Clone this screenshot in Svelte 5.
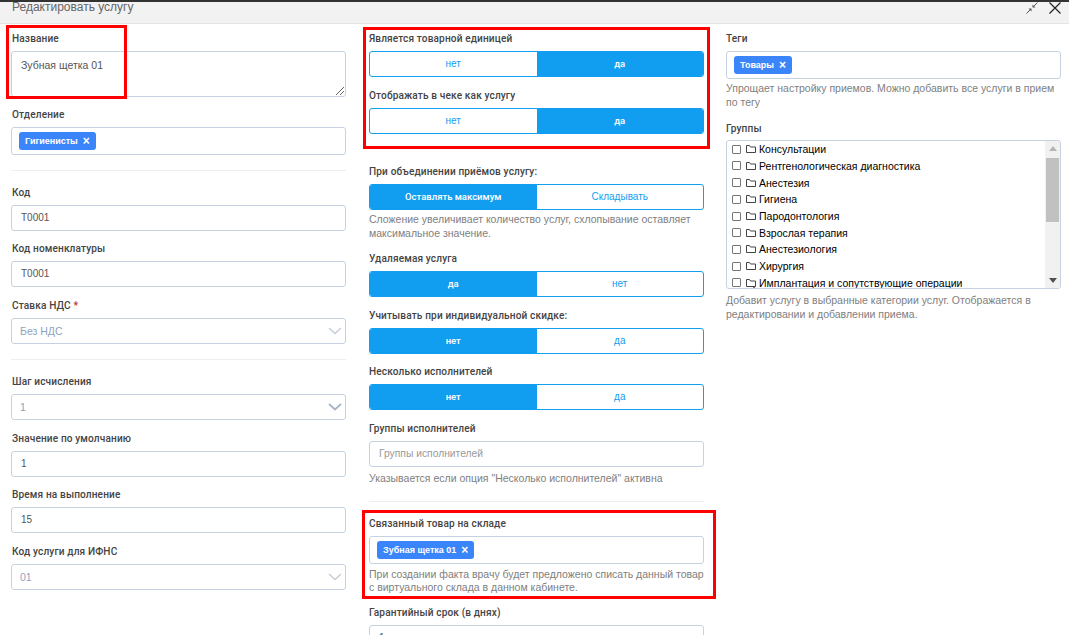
<script lang="ts">
  const groups = [
    "Консультации",
    "Рентгенологическая диагностика",
    "Анестезия",
    "Гигиена",
    "Пародонтология",
    "Взрослая терапия",
    "Анестезиология",
    "Хирургия",
    "Имплантация и сопутствующие операции",
  ];
</script>

{#snippet chip(text: string)}
  <div class="tagbox">
    <span class="chip">{text}<span class="chip-x">×</span></span>
  </div>
{/snippet}

{#snippet toggle(left: string, right: string, active: "left" | "right")}
  <div class="toggle">
    <span class="toggle-opt" class:on={active === "left"}>{left}</span>
    <span class="toggle-opt" class:on={active === "right"}>{right}</span>
  </div>
{/snippet}

{#snippet select(value: string, strong = false)}
  <div class="control select">
    <span>{value}</span>
    <svg width="14" height="8" viewBox="0 0 14 8"><path d="M1 1l6 5.5L13 1" fill="none" stroke={strong ? "#a9b5c4" : "#c3ccd8"} stroke-width={strong ? 1.8 : 1.3} /></svg>
  </div>
{/snippet}

<div class="page">
  <header class="head">
    <span class="title">Редактировать услугу</span>
    <div class="head-icons">
      <svg width="12" height="12" viewBox="0 0 12 12"><path d="M0.5 11.5L4.500 7.500M11.500 0.500L7.500 4.500" fill="none" stroke="#555" stroke-width="1" /><path d="M5.500 6.500H2.500L5.500 9.500zM6.500 5.500H9.500L6.500 2.500z" fill="#555" /></svg>
      <svg width="12" height="12" viewBox="0 0 12 12"><path d="M0.5 0.5l11 11M11.5 0.5l-11 11" fill="none" stroke="#222" stroke-width="1.2" /></svg>
    </div>
  </header>

  <div class="columns">
    <section class="col-first">
      <div class="field field-name">
        <span class="label">Название</span>
        <div class="control textarea">
          Зубная щетка 01
          <svg class="grip" width="9" height="9" viewBox="0 0 9 9"><path d="M1 9l8-8M5 9l4-4" stroke="#666" stroke-width="1" fill="none" /></svg>
        </div>
      </div>
      <div class="field">
        <span class="label">Отделение</span>
        {@render chip("Гигиенисты")}
      </div>
      <hr class="hr-first" />
      <div class="field">
        <span class="label">Код</span>
        <div class="control">T0001</div>
      </div>
      <div class="field">
        <span class="label">Код номенклатуры</span>
        <div class="control">T0001</div>
      </div>
      <div class="field">
        <span class="label">Ставка НДС <b class="req">*</b></span>
        {@render select("Без НДС")}
      </div>
      <hr />
      <div class="field">
        <span class="label">Шаг исчисления</span>
        {@render select("1", true)}
      </div>
      <div class="field">
        <span class="label">Значение по умолчанию</span>
        <div class="control">1</div>
      </div>
      <div class="field">
        <span class="label">Время на выполнение</span>
        <div class="control">15</div>
      </div>
      <div class="field">
        <span class="label">Код услуги для ИФНС</span>
        {@render select("01")}
      </div>
    </section>

    <section>
      <div class="field">
        <span class="label">Является товарной единицей</span>
        {@render toggle("нет", "да", "right")}
      </div>
      <div class="field spaced">
        <span class="label">Отображать в чеке как услугу</span>
        {@render toggle("нет", "да", "right")}
      </div>
      <div class="field">
        <span class="label">При объединении приёмов услугу:</span>
        {@render toggle("Оставлять максимум", "Складывать", "left")}
        <p class="help">Сложение увеличивает количество услуг, схлопывание оставляет максимальное значение.</p>
      </div>
      <div class="field">
        <span class="label">Удаляемая услуга</span>
        {@render toggle("да", "нет", "left")}
      </div>
      <div class="field">
        <span class="label">Учитывать при индивидуальной скидке:</span>
        {@render toggle("нет", "да", "left")}
      </div>
      <div class="field">
        <span class="label">Несколько исполнителей</span>
        {@render toggle("нет", "да", "left")}
      </div>
      <div class="field">
        <span class="label">Группы исполнителей</span>
        <div class="control placeholder">Группы исполнителей</div>
        <p class="help help-wide">Указывается если опция "Несколько исполнителей" активна</p>
      </div>
      <hr />
      <div class="field">
        <span class="label">Связанный товар на складе</span>
        {@render chip("Зубная щетка 01")}
        <p class="help help-loose">При создании факта врачу будет предложено списать данный товар с виртуального склада в данном кабинете.</p>
      </div>
      <div class="field">
        <span class="label">Гарантийный срок (в днях)</span>
        <div class="control">1</div>
      </div>
    </section>

    <section>
      <div class="field field-tags">
        <span class="label">Теги</span>
        {@render chip("Товары")}
        <p class="help">Упрощает настройку приемов. Можно добавить все услуги в прием по тегу</p>
      </div>
      <div class="field">
        <span class="label label-list">Группы</span>
        <div class="tree">
          <ul>
            {#each groups as name, i}
              <li>
                <i class="check"></i>
                <svg width="10" height="10" viewBox="0 0 10 10"><path d="M0.5 8.5V1.5h3l1 1.5h5v5.500z" fill="none" stroke="#444" stroke-width="1" />{#if i === 8}<path d="M8 8v2M7 9h2" stroke="#444" />{/if}</svg>
                <span>{name}</span>
              </li>
            {/each}
          </ul>
          <div class="scrollbar">
            <svg width="8" height="5" viewBox="0 0 8 5"><path d="M4 0l4 5H0z" fill="#b5b5b5" /></svg>
            <i class="thumb"></i>
            <svg class="down" width="8" height="5" viewBox="0 0 8 5"><path d="M0 0h8L4 5z" fill="#505050" /></svg>
          </div>
        </div>
        <p class="help help-tree">Добавит услугу в выбранные категории услуг. Отображается в редактировании и добавлении приема.</p>
      </div>
    </section>
  </div>

  <i class="mark mark-name"></i>
  <i class="mark mark-unit"></i>
  <i class="mark mark-stock"></i>
</div>

<style>
  :global(body) {
    background: #fff;
  }

  .page {
    position: relative;
    height: 635px;
    overflow: hidden;
    background: #fff;
    font-family: "Liberation Sans", Arial, sans-serif;
    font-size: 12px;
    color: #555;
  }

  .head {
    display: flex;
    justify-content: space-between;
    height: 21px;
    padding: 0 8px 0 12px;
    border-top: 2px solid #333;
    border-bottom: 1px solid #e5e5e5;
    background: #f2f2f2;
  }

  .title {
    font-size: 12px;
    line-height: 11px;
    color: #666;
  }

  .head-icons {
    display: flex;
    gap: 11px;
  }

  .columns {
    display: grid;
    grid-template-columns: 358px 357px 335px;
    padding: 6px 0 0 11px;
  }

  section {
    width: 335px;
  }

  .field {
    margin-bottom: 9.5px;
  }

  .field-name {
    margin-bottom: 9px;
  }

  .field-tags {
    margin-bottom: 10.5px;
  }

  .field.spaced {
    margin-bottom: 29.6px;
  }

  .label {
    display: block;
    height: 16px;
    margin-bottom: 5px;
    font-family: Roboto, "Liberation Sans", sans-serif;
    font-size: 10.1px;
    line-height: 18px;
    font-weight: 500;
    letter-spacing: 0.13px;
    color: #444;
  }

  .col-first .label {
    padding-left: 1px;
  }

  .label-list {
    margin-bottom: 4px;
  }

  .req {
    color: #c0392b;
  }

  .control {
    box-sizing: border-box;
    height: 26px;
    padding: 0 9px;
    border: 1px solid #c6d2e2;
    border-radius: 3px;
    font-size: 10px;
    line-height: 24px;
    color: #555;
  }

  .placeholder {
    font-size: 10.3px;
    color: #999;
  }

  .textarea {
    position: relative;
    height: 46px;
    padding-top: 1px;
    font-size: 10.5px;
    line-height: 24px;
  }

  .grip {
    position: absolute;
    right: 1px;
    bottom: 1px;
  }

  .select {
    display: flex;
    align-items: center;
    justify-content: space-between;
    padding: 0 3px 0 8px;
    font-size: 10.5px;
    color: #8fa3bd;
  }

  .tagbox {
    box-sizing: border-box;
    height: 28px;
    padding: 4px 7px;
    border: 1px solid #c6d2e2;
    border-radius: 3px;
  }

  .chip {
    display: inline-flex;
    align-items: center;
    height: 18px;
    padding: 0 6px;
    border-radius: 3px;
    background: #3b85fb;
    font-size: 9px;
    font-weight: 700;
    color: #fff;
  }

  .chip-x {
    margin-left: 5px;
    font-size: 12px;
    line-height: 12px;
  }

  .toggle {
    display: grid;
    grid-template-columns: 1fr 1fr;
    box-sizing: border-box;
    height: 26px;
    border: 1px solid #129ef0;
    border-radius: 3px;
    overflow: hidden;
  }

  .toggle-opt {
    font-size: 10px;
    line-height: 24px;
    text-align: center;
    color: #129ef0;
  }

  .toggle-opt.on {
    background: #129ef0;
    font-family: Roboto, "Liberation Sans", sans-serif;
    font-size: 9.5px;
    font-weight: 500;
    color: #fff;
  }

  .help {
    margin: 3px 0 0;
    font-size: 10.5px;
    line-height: 13.7px;
    color: #808080;
  }

  .help-wide {
    margin-top: 5.5px;
  }

  .help-loose {
    margin-top: 3.7px;
  }

  .help-tree {
    margin-top: 5px;
  }

  hr {
    margin: 15px 0 13.2px;
    border: 0;
    border-top: 1px solid #eee;
  }

  .hr-first {
    margin-bottom: 12.9px;
  }

  .tree {
    display: flex;
    box-sizing: border-box;
    height: 149px;
    border: 1px solid #c6d2e2;
    border-radius: 3px;
    overflow: hidden;
  }

  ul {
    flex: 1;
    margin: 0;
    padding: 0 0 0 5px;
    list-style: none;
  }

  li {
    display: flex;
    align-items: center;
    height: 16.7px;
    font-size: 10.5px;
    color: #000;
  }

  .check {
    box-sizing: border-box;
    width: 9px;
    height: 9px;
    margin-right: 5px;
    border: 1px solid #777;
    border-radius: 1px;
  }

  li span {
    margin-left: 3px;
    white-space: nowrap;
  }

  .scrollbar {
    display: flex;
    flex-direction: column;
    align-items: center;
    box-sizing: border-box;
    width: 15px;
    padding: 5px 0;
    background: #f1f1f1;
  }

  .thumb {
    width: 13px;
    height: 64px;
    margin-top: 7px;
    background: #c1c1c1;
  }

  .down {
    margin-top: auto;
  }

  .mark {
    position: absolute;
    box-sizing: border-box;
    border: 3px solid #f00;
  }

  .mark-name {
    left: 6px;
    top: 25px;
    width: 121px;
    height: 74px;
  }

  .mark-unit {
    left: 363px;
    top: 27px;
    width: 347px;
    height: 122px;
  }

  .mark-stock {
    left: 362px;
    top: 510px;
    width: 354px;
    height: 89px;
  }
</style>
